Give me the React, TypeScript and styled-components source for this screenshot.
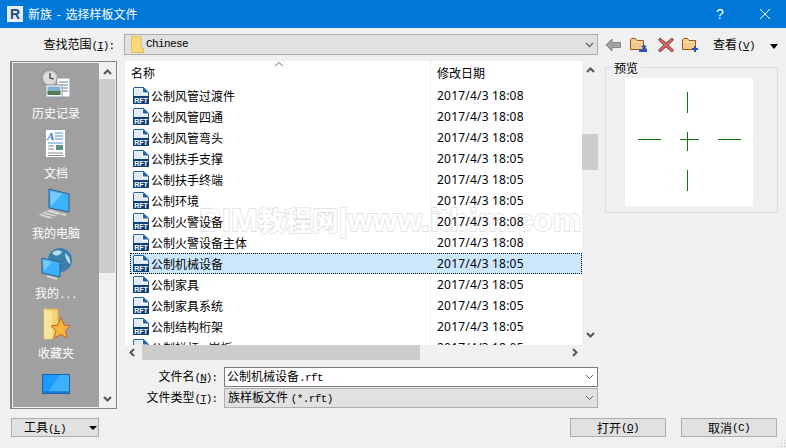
import React from 'react'
import styled, { createGlobalStyle } from 'styled-components'

const GlobalStyle = createGlobalStyle`
  html, body { margin: 0; padding: 0; background: #f0f0f0; }
  * { box-sizing: border-box; }
`

const CJK = `"Noto Sans CJK SC", "Liberation Sans", sans-serif`

const Dialog = styled.div`
  width: 786px;
  height: 448px;
  overflow: hidden;
  position: relative;
  display: flex;
  flex-direction: column;
  background: #f0f0f0;
  color: #000;
  font: 12px/16px ${CJK};
`

const TitleBar = styled.div`
  height: 28px;
  flex: none;
  display: flex;
  align-items: center;
  background: #0078d7;
  color: #fff;
  padding: 0 0 1px 7px;
  font-size: 12px;
`

const TitleText = styled.span`
  margin-left: 5px;
  flex: 1;
  word-spacing: 2px;
`

const TitleButton = styled.span<{ $width: number }>`
  width: ${p => p.$width}px;
  text-align: center;
  font: 14px/28px "Liberation Sans", sans-serif;
`

const LookRow = styled.div`
  display: flex;
  align-items: center;
  height: 21px;
  margin-top: 6px;
  flex: none;
`

const RowLabel = styled.label<{ $width: number }>`
  width: ${p => p.$width}px;
  flex: none;
  text-align: right;
  white-space: nowrap;
`

const Lat = styled.span`
  font: 11px/16px "Liberation Mono", monospace;
  letter-spacing: -0.6px;
`

const Mnemonic = styled(Lat)`
  letter-spacing: -1px;
`

const Combo = styled.div<{ $width: number; $white?: boolean; $pad: number; $gap?: number }>`
  width: ${p => p.$width}px;
  height: 100%;
  flex: none;
  display: flex;
  align-items: center;
  margin-left: ${p => p.$gap ?? 0}px;
  padding: 0 3px 0 ${p => p.$pad}px;
  background: ${p => (p.$white ? '#fff' : '#e1e1e1')};
  border: 1px solid ${p => (p.$white ? '#7a7a7a' : '#adadad')};
`

const ComboText = styled.span<{ $lift?: number }>`
  flex: 1;
  white-space: nowrap;
  margin-bottom: ${p => p.$lift ?? 0}px;
`

const ComboFolder = styled.svg`
  margin-right: 2px;
  flex: none;
`

const Toolbar = styled.div`
  display: flex;
  align-items: center;
  margin-left: 7px;
  height: 100%;
`

const ToolIcon = styled.svg<{ $gap: number }>`
  flex: none;
  margin-right: ${p => p.$gap}px;
`

const ViewLabel = styled.span`
  white-space: nowrap;
  margin-top: 1px;
`

const ViewCaret = styled.span`
  display: inline-block;
  margin: 3px 0 0 15px;
  border: 4px solid transparent;
  border-top: 5px solid #000;
  border-bottom: 0;
`

const Main = styled.div`
  display: flex;
  align-items: flex-start;
  margin-top: 6px;
  padding-left: 10px;
  flex: none;
`

const Sidebar = styled.div`
  width: 107px;
  height: 348px;
  flex: none;
  display: flex;
  border: 1px solid #85858f;
  border-left-width: 2px;
  padding: 1px;
  background: #f0f0f0;
`

const Places = styled.div`
  width: 86px;
  background: #a0a0a0;
  color: #fff;
  overflow: hidden;
  padding-top: 3px;
`

const Place = styled.div`
  height: 60px;
  flex: none;
  display: flex;
  flex-direction: column;
  align-items: center;
`

const PlaceIcon = styled.div`
  height: 36px;
  flex: none;
  display: flex;
  align-items: center;
  justify-content: center;
`

const PlaceLabel = styled.div`
  margin-top: 3px;
  font-size: 12px;
  line-height: 16px;
`

const VScroll = styled.div<{ $width: number }>`
  width: ${p => p.$width}px;
  flex: none;
  display: flex;
  flex-direction: column;
  align-items: stretch;
  background: #f0f0f0;
  position: relative;
`

const Thumb = styled.div<{ $top: number; $height: number }>`
  margin-top: ${p => p.$top}px;
  height: ${p => p.$height}px;
  background: #cdcdcd;
  flex: none;
`

const ArrowSlot = styled.div<{ $pin: 'top' | 'bottom'; $inset?: number }>`
  position: absolute;
  left: 0;
  right: 0;
  ${p => p.$pin}: ${p => p.$inset ?? 0}px;
  height: 17px;
  display: flex;
  align-items: center;
  justify-content: center;
`

const Center = styled.div`
  width: 473px;
  margin-left: 8px;
  flex: none;
  display: flex;
  flex-direction: column;
`

const ListWrap = styled.div`
  display: flex;
  height: 284px;
`

const FileList = styled.div`
  width: 457px;
  flex: none;
  background: #fff;
  overflow: hidden;
  position: relative;
`

const Watermark = styled.div`
  position: absolute;
  left: 74px;
  top: 141px;
  white-space: nowrap;
  font: bold 32px/36px "Liberation Sans", ${CJK};
  color: #fff;
  -webkit-text-stroke: 1.5px #dedede;
  paint-order: stroke fill;
`

const WatermarkCjk = styled.span`
  font-size: 27px;
`

const SortCaret = styled.svg`
  position: absolute;
  left: 149px;
  top: 0;
`

const ColRule = styled.div`
  position: absolute;
  left: 305px;
  top: 0;
  bottom: 0;
  width: 1px;
  background: #e9f1f9;
`

const Header = styled.div`
  height: 24px;
  display: flex;
  align-items: center;
  padding: 0 0 0 6px;
  position: relative;
`

const NameCol = styled.div`
  width: 306px;
  flex: none;
`

const Row = styled.div<{ $selected?: boolean }>`
  height: 21px;
  display: flex;
  align-items: center;
  position: relative;
  margin-left: 5px;
  padding-left: 3px;
  background: ${p => (p.$selected ? '#cce8ff' : 'transparent')};
  outline: ${p => (p.$selected ? '1px dotted #000' : 'none')};
  outline-offset: -1px;
`

const RowName = styled.span`
  width: 286px;
  flex: none;
  margin-left: 2px;
  white-space: nowrap;
`

const RowDate = styled.span`
  font: 12px/16px "Noto Sans", sans-serif;
  letter-spacing: 0.2px;
  white-space: nowrap;
`

const HScroll = styled.div`
  height: 15px;
  width: 457px;
  display: flex;
  align-items: center;
  position: relative;
  background: #f0f0f0;
`

const HThumb = styled.div`
  height: 100%;
  width: 278px;
  margin-left: 17px;
  background: #cdcdcd;
`

const HArrow = styled.svg<{ $side: 'left' | 'right' }>`
  position: absolute;
  ${p => p.$side}: 4px;
  top: 3px;
`

const Field = styled.div<{ $top: number }>`
  display: flex;
  align-items: center;
  height: 20px;
  margin-top: ${p => p.$top}px;
`

const FieldLabel = styled(RowLabel)`
  margin-right: 7px;
`

const Preview = styled.fieldset`
  width: 173px;
  height: 152px;
  margin: 0 0 0 7px;
  padding: 4px 0 0 19px;
  flex: none;
  border: 1px solid #dcdcdc;
`

const PreviewLegend = styled.legend`
  margin-left: -14px;
  padding: 0 3px;
  line-height: 13px;
`

const PreviewPane = styled.svg`
  display: block;
  background: #fff;
`

const Footer = styled.div`
  display: flex;
  margin-top: 9px;
  padding: 0 9px 0 11px;
`

const Button = styled.div<{ $width: number; $gap?: number }>`
  width: ${p => p.$width}px;
  height: 19px;
  margin-left: ${p => p.$gap ?? 0}px;
  display: flex;
  align-items: center;
  justify-content: center;
  background: #e1e1e1;
  border: 1px solid #adadad;
  white-space: nowrap;
  position: relative;
`

const ToolsLabel = styled.span`
  margin-right: 20px;
`

const ToolsCaret = styled.span`
  position: absolute;
  right: 1px;
  top: 7px;
  border: 4px solid transparent;
  border-top: 4px solid #000;
  border-bottom: 0;
`

const Grip = styled.svg`
  position: absolute;
  right: 0;
  bottom: 0;
`

const Chevron = ({ up, color = '#555', w = 2 }: { up?: boolean; color?: string; w?: number }) => (
  <svg width="9" height="6" viewBox="0 0 9 6">
    <path d={up ? 'M1 5 L4.5 1.5 L8 5' : 'M1 1 L4.5 4.5 L8 1'} fill="none" stroke={color} strokeWidth={w} />
  </svg>
)

const RftSvg = styled.svg`
  flex: none;
`

const RftIcon = () => (
  <RftSvg width="16" height="17" viewBox="0 0 16 17">
    <path d="M1 .5 H10.5 L15.5 5 V16 H.5 V1 Z" fill="#fff" stroke="#1f5d9c" />
    <path d="M10 .5 V5.5 H15.5 Z" fill="#1a5ea6" />
    <path d="M1.5 1.5 H9 V7 H14.5 V9 H1.5 Z" fill="#dfeaf5" />
    <rect x="0" y="9" width="16" height="8" fill="#0f3f77" />
    <text x="8" y="15.8" textAnchor="middle" fontSize="7" fontWeight="bold" fill="#fff" fontFamily="Liberation Sans">RFT</text>
  </RftSvg>
)

const rows = [
  ['公制风管过渡件', '18:08'],
  ['公制风管四通', '18:08'],
  ['公制风管弯头', '18:08'],
  ['公制扶手支撑', '18:05'],
  ['公制扶手终端', '18:05'],
  ['公制环境', '18:05'],
  ['公制火警设备', '18:08'],
  ['公制火警设备主体', '18:08'],
  ['公制机械设备', '18:05'],
  ['公制家具', '18:05'],
  ['公制家具系统', '18:05'],
  ['公制结构桁架', '18:05'],
  ['公制栏杆 - 嵌板', '18:05'],
]

const FolderSmall = ({ mark }: { mark: 'up' | 'new' }) => (
  <>
    <path d="M.5 2.5 V12.5 H13.5 V3.5 H7 L5.5 1.5 H1.5 Z" fill="#f5c98a" stroke="#9c5a1c" />
    <path d="M1.5 5 H12.5" stroke="#fbe6c6" />
    {mark === 'up' ? (
      <path d="M11 10 L14 7.5 L17 10 H15.5 V11.5 H17 V15 H9 V12.5 H12.5 V10 Z" fill="#2c55b5" />
    ) : (
      <path d="M12 9 H14 V11 H16 V13 H14 V15 H12 V13 H10 V11 H12 Z" fill="#2c55b5" />
    )}
  </>
)

const HistoryIcon = () => (
  <svg width="32" height="32" viewBox="0 0 32 32">
    <circle cx="10" cy="10" r="8.5" fill="#b9b9b9" stroke="#8a8a8a" />
    <circle cx="10" cy="10" r="6.5" fill="#dcdcdc" />
    <path d="M10 5 V10 L14 11" fill="none" stroke="#333" strokeWidth="1.2" />
    <rect x="17" y="10" width="13" height="19" fill="#fff" stroke="#8c9aa8" />
    <path d="M19 14 H28 M19 17 H28 M19 20 H28 M19 23 H28" stroke="#6d8197" />
    <rect x="6" y="17" width="16" height="12" fill="#fff" stroke="#8c9aa8" />
    <rect x="7.5" y="18.5" width="13" height="6" fill="#7fb2d0" />
    <rect x="7.5" y="23" width="13" height="4" fill="#4f7a52" />
  </svg>
)

const DocumentIcon = () => (
  <svg width="22" height="30" viewBox="0 0 22 30">
    <rect x=".5" y=".5" width="20" height="28" fill="#fff" stroke="#9aa5b1" />
    <text x="2" y="11" fontSize="11" fontWeight="bold" fontStyle="italic" fill="#2a7ad6" fontFamily="Liberation Serif">A</text>
    <path d="M10 4 H18 M10 7 H18 M10 10 H18 M3 14 H18" stroke="#4f8fd0" />
    <rect x="11" y="16" width="7" height="5" fill="#5e8f86" />
    <path d="M3 17 H9 M3 20 H9 M3 24 H18 M3 26.500 H18" stroke="#8a8a8a" />
  </svg>
)

const ComputerIcon = () => (
  <svg width="36" height="32" viewBox="0 0 36 32">
    <path d="M11 1 L31 6 V24 L11 20 Z" fill="#3eb1fb" stroke="#2e5f86" />
    <path d="M12 3 L24 6 L13 18 Z" fill="#74ccff" />
    <path d="M18 24 L28 26 V28 L18 26 Z" fill="#d8d8d8" />
    <path d="M0 27 L12 21 L24 25 L12 31 Z" fill="#d5d5d5" stroke="#a9a9a9" />
    <path d="M5 26 L16 29 M8 24 L19 27" stroke="#999" />
  </svg>
)

const NetworkIcon = () => (
  <svg width="32" height="32" viewBox="0 0 32 32">
    <circle cx="20" cy="12" r="12" fill="#3a7fae" />
    <path d="M12 5 C16 1 20 2 22 4 C20 8 15 9 12 5 Z M25 5 C29 8 31 12 30 16 C27 14 25 9 25 5 Z" fill="#b5dcef" />
    <path d="M2 10 L20 14 V29 L2 25 Z" fill="#3eb1fb" stroke="#2e5f86" />
    <path d="M3 12 L12 14 L4 23 Z" fill="#74ccff" />
    <path d="M7 27 L17 30 V32 L7 29 Z" fill="#d5d5d5" />
  </svg>
)

const FavoritesIcon = () => (
  <svg width="30" height="32" viewBox="0 0 30 32">
    <path d="M3 1 H17 V28 L10 31 H3 Z" fill="#f2d36f" stroke="#d9b659" />
    <path d="M3 1 L11 4 V31 H3 Z" fill="#f7e39a" />
    <path d="M20 9 L23 17 L29 18 L24.500 22.500 L26 30 L20 26.500 L13 30 L15 22.500 L10 18 L17 17 Z" fill="#f5b43a" stroke="#c9632a" />
  </svg>
)

const DesktopIcon = () => (
  <svg width="28" height="20" viewBox="0 0 28 20">
    <rect x=".5" y=".5" width="27" height="19" fill="#1c9bff" stroke="#1565a8" />
    <path d="M18 1 L27 1 V18 L6 18 Z" fill="#3fb0ff" />
    <path d="M1 18 H27" stroke="#0a5fb0" />
  </svg>
)

const places = [
  { label: '历史记录', icon: <HistoryIcon /> },
  { label: '文档', icon: <DocumentIcon /> },
  { label: '我的电脑', icon: <ComputerIcon /> },
  { label: <>我的<Lat>...</Lat></>, icon: <NetworkIcon /> },
  { label: '收藏夹', icon: <FavoritesIcon /> },
  { label: '', icon: <DesktopIcon /> },
]

export default function App() {
  return (
    <Dialog>
      <GlobalStyle />
      <TitleBar>
        <svg width="16" height="16" viewBox="0 0 16 16">
          <rect width="16" height="16" fill="#e8edf3" />
          <text x="8" y="13" textAnchor="middle" fontSize="14" fontWeight="bold" fill="#1b4f8a" fontFamily="Liberation Sans">R</text>
        </svg>
        <TitleText>新族 - 选择样板文件</TitleText>
        <TitleButton $width={48}>?</TitleButton>
        <TitleButton $width={42}>
          <svg width="10" height="10" viewBox="0 0 10 10">
            <path d="M0 0 L10 10 M10 0 L0 10" stroke="#fff" />
          </svg>
        </TitleButton>
      </TitleBar>

      <LookRow>
        <RowLabel $width={114}>查找范围<Mnemonic>(<u>I</u>):</Mnemonic></RowLabel>
        <Combo $width={474} $pad={6} $gap={10}>
          <ComboFolder width="13" height="17" viewBox="0 0 13 17">
            <path d="M.5 .5 H10 V12 H12.5 V16.500 H.5 Z" fill="#fbd976" stroke="#e0bc62" />
          </ComboFolder>
          <ComboText $lift={3}><Lat>Chinese</Lat></ComboText>
          <Chevron color="#666" w={1.4} />
        </Combo>
        <Toolbar>
          <ToolIcon $gap={9} width="16" height="14" viewBox="0 0 16 14">
            <path d="M7 1 L1 7 L7 13 V9.500 H15.500 V4.500 H7 Z" fill="#a3a3a3" stroke="#868686" />
          </ToolIcon>
          <ToolIcon $gap={10} width="18" height="16" viewBox="0 0 18 16">
            <FolderSmall mark="up" />
          </ToolIcon>
          <ToolIcon $gap={8} width="16" height="16" viewBox="0 0 16 16">
            <path d="M2 1 L8 6 L14 1 L15.500 3 L10 8 L15.500 13 L14 15 L8 10 L2 15 L.5 13 L6 8 L.5 3 Z" fill="#d26a6a" stroke="#8f3a3a" />
          </ToolIcon>
          <ToolIcon $gap={13} width="18" height="16" viewBox="0 0 18 16">
            <FolderSmall mark="new" />
          </ToolIcon>
          <ViewLabel>查看<Lat>(<u>V</u>)</Lat></ViewLabel>
          <ViewCaret />
        </Toolbar>
      </LookRow>

      <Main>
        <Sidebar>
          <Places>
            {places.map((item, i) => (
              <Place key={i}>
                <PlaceIcon>{item.icon}</PlaceIcon>
                <PlaceLabel>{item.label}</PlaceLabel>
              </Place>
            ))}
          </Places>
          <VScroll $width={16}>
            <ArrowSlot $pin="top"><Chevron up /></ArrowSlot>
            <Thumb $top={16} $height={194} />
            <ArrowSlot $pin="bottom"><Chevron /></ArrowSlot>
          </VScroll>
        </Sidebar>

        <Center>
          <ListWrap>
            <FileList>
              <Watermark>BIM<WatermarkCjk>教程网</WatermarkCjk>|www.itbim.com</Watermark>
              <ColRule />
              <SortCaret width="10" height="6" viewBox="0 0 10 6">
                <path d="M1 5 L5 1.500 L9 5" fill="none" stroke="#777" />
              </SortCaret>
              <Header>
                <NameCol>名称</NameCol>
                <span>修改日期</span>
              </Header>
              {rows.map(([name, time]) => (
                <Row key={name} $selected={name === '公制机械设备'}>
                  <RftIcon />
                  <RowName>{name}</RowName>
                  <RowDate>2017/4/3 {time}</RowDate>
                </Row>
              ))}
            </FileList>
            <VScroll $width={16}>
              <ArrowSlot $pin="top"><Chevron up /></ArrowSlot>
              <Thumb $top={73} $height={36} />
              <ArrowSlot $pin="bottom" $inset={2}><Chevron /></ArrowSlot>
            </VScroll>
          </ListWrap>

          <HScroll>
            <HArrow $side="left" width="6" height="9" viewBox="0 0 6 9">
              <path d="M5 1 L1.500 4.500 L5 8" fill="none" stroke="#555" strokeWidth="2" />
            </HArrow>
            <HThumb />
            <HArrow $side="right" width="6" height="9" viewBox="0 0 6 9">
              <path d="M1 1 L4.500 4.500 L1 8" fill="none" stroke="#555" strokeWidth="2" />
            </HArrow>
          </HScroll>

          <Field $top={7}>
            <FieldLabel $width={92}>文件名<Mnemonic>(<u>N</u>):</Mnemonic></FieldLabel>
            <Combo $width={374} $white $pad={2}>
              <ComboText>公制机械设备<Lat>.rft</Lat></ComboText>
              <Chevron color="#666" w={1} />
            </Combo>
          </Field>
          <Field $top={1}>
            <FieldLabel $width={92}>文件类型<Mnemonic>(<u>T</u>):</Mnemonic></FieldLabel>
            <Combo $width={374} $pad={3}>
              <ComboText>族样板文件 <Lat>(*.rft)</Lat></ComboText>
              <Chevron color="#666" w={1} />
            </Combo>
          </Field>
        </Center>

        <Preview>
          <PreviewLegend>预览</PreviewLegend>
          <PreviewPane width="128" height="128" viewBox="0 0 128 128">
            <path
              d="M62.500 14 V35 M62.500 92 V113 M13 61.500 H36 M93 61.500 H116 M55 61.500 H74 M62.500 54 V73"
              stroke="#0a7a0a"
              fill="none"
            />
          </PreviewPane>
        </Preview>
      </Main>

      <Footer>
        <Button $width={88}>
          <ToolsLabel>工具<Lat>(<u>L</u>)</Lat></ToolsLabel>
          <ToolsCaret />
        </Button>
        <Button $width={96} $gap={471}>打开<Lat>(<u>O</u>)</Lat></Button>
        <Button $width={96} $gap={15}>取消<Lat>(C)</Lat></Button>
      </Footer>

      <Grip width="9" height="9" viewBox="0 0 9 9">
        <path d="M7 1 h1 v1 h-1 Z M4 4 h1 v1 h-1 Z M7 4 h1 v1 h-1 Z M1 7 h1 v1 h-1 Z M4 7 h1 v1 h-1 Z M7 7 h1 v1 h-1 Z" fill="#b8b8b8" />
      </Grip>
    </Dialog>
  )
}
